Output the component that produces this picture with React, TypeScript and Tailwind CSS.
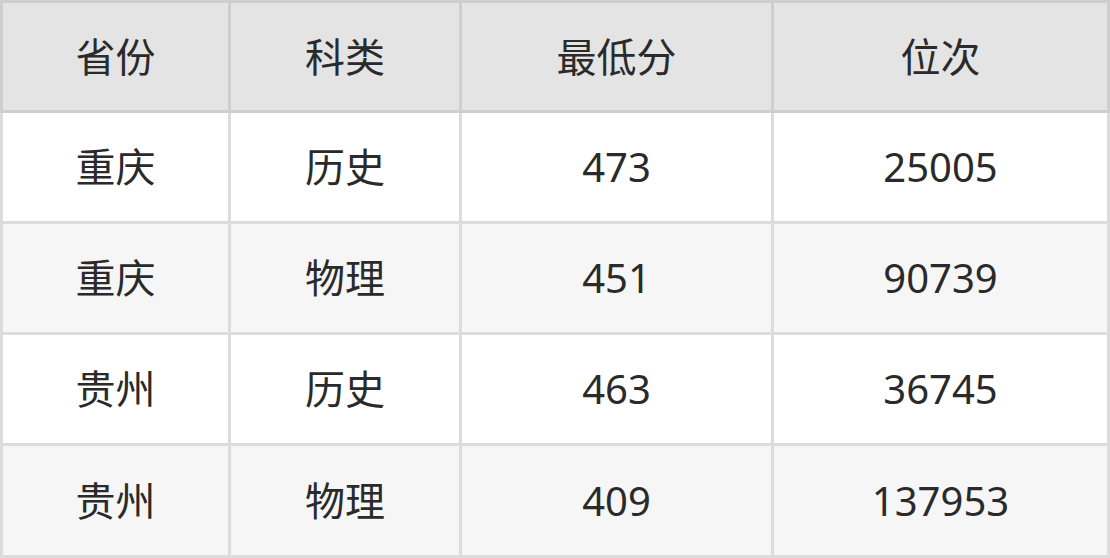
const header = ['省份', '科类', '最低分', '位次']

const rows = [
  ['重庆', '历史', '473', '25005'],
  ['重庆', '物理', '451', '90739'],
  ['贵州', '历史', '463', '36745'],
  ['贵州', '物理', '409', '137953'],
]

const cols = 'grid grid-cols-[225px_228px_309px_333px] gap-[3px]'

export default function App() {
  return (
    <div
      className="w-[1110px] h-[558px] flex flex-col text-[40px] text-[#2a2a2a]"
      style={{ fontFamily: '"Noto Sans", "Noto Sans CJK SC", sans-serif' }}
    >
      <div className={`${cols} bg-[#cecece] p-[3px]`}>
        {header.map((h) => (
          <div key={h} className="h-[107px] bg-[#e4e4e4] flex items-center justify-center">
            {h}
          </div>
        ))}
      </div>
      <div className="flex flex-col gap-[3px] bg-[#dcdcdc] px-[3px] pb-[3px]">
        {rows.map((r, i) => (
          <div key={i} className={cols}>
            {r.map((c, j) => (
              <div
                key={j}
                className={`${i === 3 ? 'h-[109px]' : 'h-[108px]'} ${i % 2 === 0 ? 'bg-white' : 'bg-[#f6f6f6]'} flex items-center justify-center`}
              >
                {c}
              </div>
            ))}
          </div>
        ))}
      </div>
    </div>
  )
}
